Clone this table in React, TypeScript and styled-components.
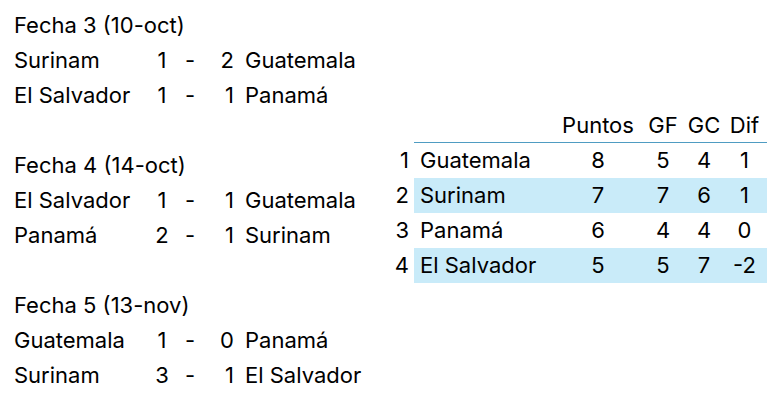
import React from 'react'
import styled, { createGlobalStyle } from 'styled-components'

const GlobalStyle = createGlobalStyle`
  html, body {
    margin: 0;
    padding: 0;
    background: #ffffff;
  }
  body {
    font-family: 'Inter', 'Liberation Sans', sans-serif;
    font-size: 22px;
    color: #000000;
  }
`

const rounds = [
  {
    title: 'Fecha 3 (10-oct)',
    matches: [
      ['Surinam', 1, 2, 'Guatemala'],
      ['El Salvador', 1, 1, 'Panamá']
    ]
  },
  {
    title: 'Fecha 4 (14-oct)',
    matches: [
      ['El Salvador', 1, 1, 'Guatemala'],
      ['Panamá', 2, 1, 'Surinam']
    ]
  },
  {
    title: 'Fecha 5 (13-nov)',
    matches: [
      ['Guatemala', 1, 0, 'Panamá'],
      ['Surinam', 3, 1, 'El Salvador']
    ]
  }
]

const standings = [
  { pos: 1, team: 'Guatemala', pts: 8, gf: 5, gc: 4, dif: 1 },
  { pos: 2, team: 'Surinam', pts: 7, gf: 7, gc: 6, dif: 1 },
  { pos: 3, team: 'Panamá', pts: 6, gf: 4, gc: 4, dif: 0 },
  { pos: 4, team: 'El Salvador', pts: 5, gf: 5, gc: 7, dif: -2 }
]

const Page = styled.div`
  display: flex;
  align-items: flex-start;
  padding: 8px 0 0 14px;
  width: 782px;
  height: 407px;
  box-sizing: border-box;
  overflow: hidden;
`

const Fixtures = styled.div`
  display: flex;
  flex-direction: column;
  width: 376px;
`

const Round = styled.div`
  margin-bottom: 35px;

  &:last-child {
    margin-bottom: 0;
  }
`

const RoundTitle = styled.div`
  height: 35px;
  line-height: 35px;
  white-space: nowrap;
`

const MatchRow = styled.div`
  display: grid;
  grid-template-columns: 136px 24px 32px 34px auto;
  height: 35px;
  line-height: 35px;
  white-space: nowrap;
`

const Team = styled.span<{ $away?: boolean }>`
  padding-left: ${({ $away }) => ($away ? '5px' : '0')};
`

const Goal = styled.span<{ $right?: boolean }>`
  text-align: ${({ $right }) => ($right ? 'right' : 'center')};
  padding-right: ${({ $right }) => ($right ? '6px' : '0')};
`

const Dash = styled.span`
  text-align: center;
`

const Table = styled.div`
  margin-top: 100px;
  display: grid;
  grid-template-columns: 24px 142px 84px 46px 36px 45px;
  white-space: nowrap;
`

const Row = styled.div<{ $shaded?: boolean; $head?: boolean }>`
  display: contents;

  & > span {
    height: ${({ $head }) => ($head ? '34px' : '35px')};
    line-height: ${({ $head }) => ($head ? '34px' : '35px')};
    background: ${({ $shaded }) => ($shaded ? '#c9ebf9' : 'transparent')};
    border-bottom: ${({ $head }) => ($head ? '1px solid #4f9cc2' : 'none')};
  }

  & > span:first-child {
    background: transparent;
    border-bottom: none;
  }
`

const Rank = styled.span`
  text-align: right;
  padding-right: 5px;
`

const Name = styled.span`
  padding-left: 6px;
`

const Num = styled.span`
  text-align: center;
`

export default function App() {
  return (
    <>
      <GlobalStyle />
      <Page>
        <Fixtures>
          {rounds.map(r => (
            <Round key={r.title}>
              <RoundTitle>{r.title}</RoundTitle>
              {r.matches.map(m => (
                <MatchRow key={String(m[0])}>
                  <Team>{m[0]}</Team>
                  <Goal>{m[1]}</Goal>
                  <Dash>-</Dash>
                  <Goal $right>{m[2]}</Goal>
                  <Team $away>{m[3]}</Team>
                </MatchRow>
              ))}
            </Round>
          ))}
        </Fixtures>
        <Table>
          <Row $head>
            <Rank />
            <Name />
            <Num>Puntos</Num>
            <Num>GF</Num>
            <Num>GC</Num>
            <Num>Dif</Num>
          </Row>
          {standings.map(s => (
            <Row key={s.pos} $shaded={s.pos % 2 === 0}>
              <Rank>{s.pos}</Rank>
              <Name>{s.team}</Name>
              <Num>{s.pts}</Num>
              <Num>{s.gf}</Num>
              <Num>{s.gc}</Num>
              <Num>{s.dif}</Num>
            </Row>
          ))}
        </Table>
      </Page>
    </>
  )
}
